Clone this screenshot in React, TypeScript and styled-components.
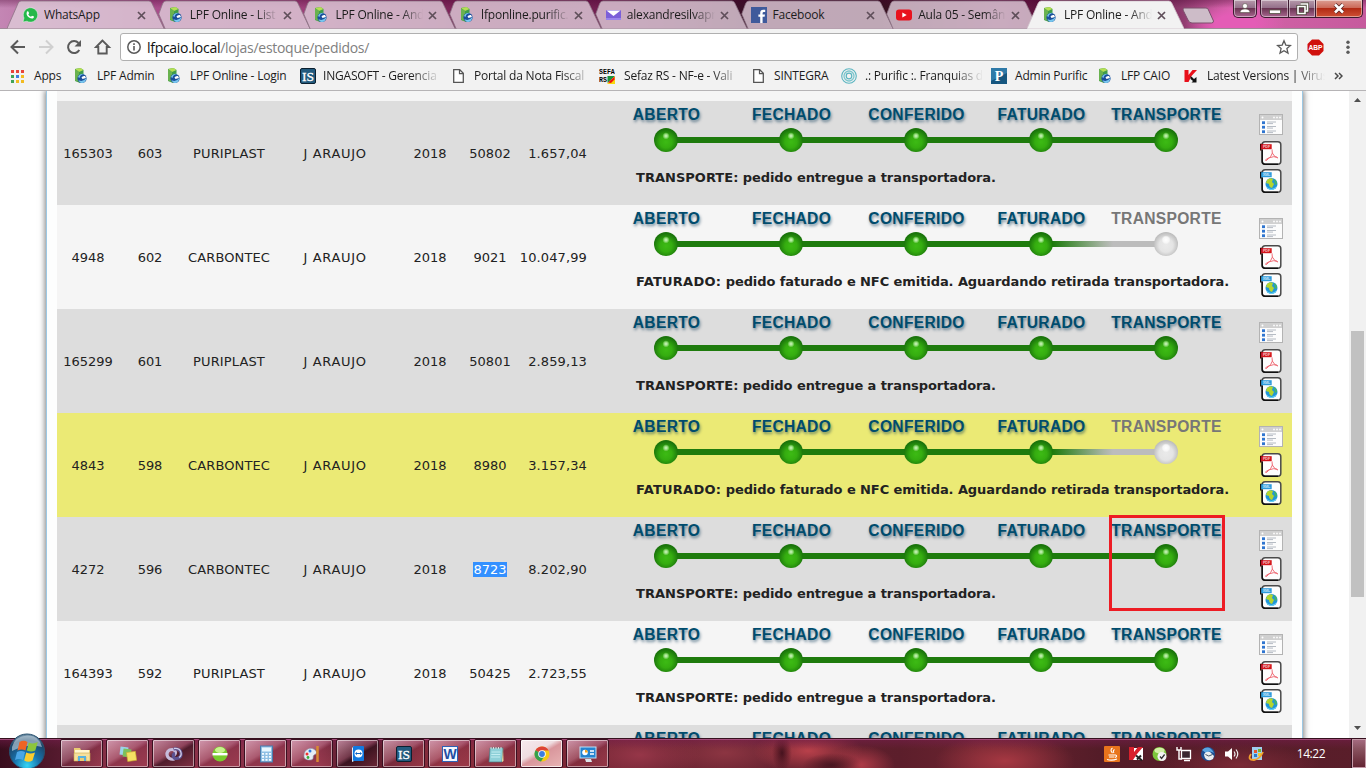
import React from 'react';
import styled, { createGlobalStyle, css } from 'styled-components';

const Global = createGlobalStyle`
  * { box-sizing: border-box; }
  body { margin: 0; overflow: hidden; background: #fff; }
  svg { display: block; flex: none; }
`;
const uiFont = `'Open Sans', 'Noto Sans', sans-serif`;

const Screen = styled.div`
  width: 1366px; height: 768px; display: flex; flex-direction: column; overflow: hidden;
  font-family: ${uiFont}; font-size: 12px; color: #1c1c1c;
`;

/* ---------- browser chrome ---------- */
const TabStrip = styled.div`
  position: relative; height: 29px; flex: none; display: flex; padding-left: 7px;
  border-bottom: 1px solid #a08898;
  background:
    linear-gradient(180deg, rgba(70,0,45,.35) 0, transparent 8px),
    radial-gradient(ellipse 50px 22px at 1235px 24px, #e45cb6 40%, transparent),
    linear-gradient(90deg, #c486b4 0, #a94d8c 150px, #9c3f78 320px, #7a2457 460px, #701f50 620px, #3a1028 740px, #35101f 880px, #6b1d4b 1000px, #4d0c2e 1080px, #8c3a6c 1180px, #d363a8 1230px, #c65a9d 1366px);
`;
const TabBox = styled.div`
  position: relative; width: 157px; height: 29px; margin-right: -11.3px; flex: none;
  display: flex; align-items: center; padding: 1px 0 0 15px;
`;
const TabShape = styled.svg`position: absolute; left: 0; top: 0;`;
const TabIcon = styled.div`position: relative; width: 16px; height: 16px; margin-right: 6px;`;
const TabTitle = styled.div<{ $fade?: boolean }>`
  position: relative; width: 88px; margin-right: 5px; white-space: nowrap; overflow: hidden; line-height: 18px;
  letter-spacing: -0.2px;
  ${p => p.$fade && css`mask-image: linear-gradient(90deg, #000 66px, transparent 88px);`}
`;
const TabClose = styled.div`position: relative; flex: none;`;
const NewTab = styled.svg`margin: 7px 0 0 9px;`;
const WinButtons = styled.div`
  position: absolute; right: 3px; top: 0; display: flex; height: 18px;
`;
const WinButton = styled.div<{ $w: number; $close?: boolean; $solo?: boolean; $first?: boolean }>`
  width: ${p => p.$w}px; height: 18px; display: flex; align-items: center; justify-content: center;
  border: 1px solid #3d1a30; border-top: 0; box-shadow: inset 0 0 0 1px rgba(255,255,255,.45);
  margin-left: ${p => (p.$solo || p.$first ? 0 : -1)}px; margin-right: ${p => (p.$solo ? 3 : 0)}px;
  border-radius: ${p => (p.$solo ? '0 0 5px 5px' : p.$close ? '0 0 5px 0' : p.$first ? '0 0 0 5px' : '0')};
  background: ${p => p.$close
    ? 'linear-gradient(180deg,#dc9f94 0,#cc6a59 45%,#b22b15 50%,#cf5035 100%)'
    : 'linear-gradient(180deg,#b79aab 0,#94708a 45%,#6a3553 50%,#a8668f 100%)'};
`;
const Toolbar = styled.div`
  height: 32px; flex: none; background: #f2f2f2; display: flex; align-items: center; padding: 4px 8px 0 10px;
`;
const NavIcon = styled.div`width: 28px; height: 20px;`;
const AddressBar = styled.div`
  width: 1178px; height: 28px; margin-left: -2px; background: #fff; border: 1px solid #b0b0b0; border-radius: 3px;
  display: flex; align-items: center; padding: 0 5px; font-size: 14px;
`;
const Url = styled.div`
  flex: 1; margin-left: 5px; color: #808080; letter-spacing: -0.29px; white-space: nowrap;
  b { font-weight: 400; color: #111; }
`;
const ExtensionIcon = styled.div`margin: 0 22px 0 9px;`;
const Bookmarks = styled.div`
  height: 30px; flex: none; background: #f2f2f2; border-bottom: 1px solid #b6b4b6; display: flex; align-items: center;
  padding-left: 9px;
`;
const Bookmark = styled.div<{ $w: number; $gap: number }>`
  width: ${p => p.$w}px; flex: none; display: flex; align-items: center; gap: ${p => p.$gap}px;
`;
const BookmarkLabel = styled.div<{ $fade?: boolean }>`
  max-width: 122px; white-space: nowrap; line-height: 18px; letter-spacing: -0.2px;
  ${p => p.$fade && css`mask-image: linear-gradient(90deg, #000 88px, transparent 118px);`}
`;

/* ---------- page ---------- */
const Page = styled.div`
  height: 647px; flex: none; display: flex; overflow: hidden; background: #fff;
`;
const Sheet = styled.div`
  margin-left: 46px; width: 1257px; height: 900px; flex: none; padding: 0 10px; background: #fdfefe;
  border-left: 1px solid #9cc8e4; border-right: 1px solid #9cc8e4; box-shadow: 0 0 6px 1px rgba(0,0,0,.5);
`;
const PrevRow = styled.div`height: 10px; background: #f5f5f5;`;
const Row = styled.div<{ $bg: string }>`
  position: relative; height: 104px; background: ${p => p.$bg};
  display: grid; grid-template-columns: 62px 62px 96px 116px 74px 46px 74px 17px 625px 63px;
  align-items: center; justify-items: center;
  font-family: Verdana, 'DejaVu Sans', sans-serif; font-size: 13px; color: #222;
`;
const Cell = styled.div<{ $ls?: number }>`white-space: nowrap; padding-top: 1px; letter-spacing: ${p => p.$ls ?? -0.05}px;`;
const Marked = styled.span`background: #3390ff; color: #fff;`;
const Amount = styled(Cell)`justify-self: end;`;
const Status = styled.div`width: 625px; height: 104px; grid-column: 9; display: flex; flex-direction: column;`;
const Steps = styled.div`display: flex; padding-top: 4px;`;
const Step = styled.div`position: relative; width: 125px; display: flex; flex-direction: column; align-items: center;`;
const StepLabel = styled.div<{ $off?: boolean }>`
  font: bold 15.6px/20px 'Liberation Sans', Arial, sans-serif; height: 23px; white-space: nowrap; letter-spacing: 0.3px;
  color: ${p => (p.$off ? '#777' : '#004c6d')};
  text-shadow: ${p => (p.$off ? 'none' : '1px 2px 3px rgba(0,50,80,.55)')};
`;
const Track = styled.div<{ $part: 'first' | 'mid' | 'last'; $left: string; $right: string }>`
  width: 125px; height: 24px; display: flex; align-items: center; padding-left: 50px;
  background:
    linear-gradient(${p => (p.$part === 'first' ? 'transparent,transparent' : p.$left)}) 0 9px / 62px 6px no-repeat,
    linear-gradient(${p => (p.$part === 'last' ? 'transparent,transparent' : p.$right)}) 62px 9px / 63px 6px no-repeat;
`;
const Ball = styled.div<{ $off?: boolean }>`
  width: 24px; height: 24px; border-radius: 50%;
  background: ${p => (p.$off
    ? 'radial-gradient(circle at 50% 33%, #fff 0, #f6f6f6 3px, transparent 4.5px), radial-gradient(circle at 50% 55%, #eaeaea 0, #e4e4e4 7px, #bdbdbd 12.5px)'
    : 'radial-gradient(circle at 50% 33%, #d2f5c6 0, #93dc7a 1.8px, transparent 3.6px), radial-gradient(circle at 50% 58%, #3dbb14 0, #35ad10 6px, #1a740b 12.5px)')};
`;
const Message = styled.div`
  margin: 17px 0 0 32px; font: bold 13px/18px Verdana, 'DejaVu Sans', sans-serif; white-space: nowrap; letter-spacing: -0.08px;
`;
const MessageState = styled.span<{ $ls: number }>`letter-spacing: ${p => p.$ls}px;`;
const Actions = styled.div`
  grid-column: 10; align-self: start; padding-top: 13px; padding-left: 21px; display: flex; flex-direction: column; align-items: center;
`;
const ActionLink = styled.div<{ $gap?: number; $shift?: number }>`
  margin-bottom: ${p => p.$gap ?? 0}px; padding-right: ${p => p.$shift ?? 0}px;
`;
const RedFrame = styled.div`
  position: absolute; left: 5px; top: -6px; width: 116px; height: 96px; border: 3px solid #ed1c24;
`;
const ScrollBar = styled.div`
  margin-left: auto; width: 17px; background: #f1f1f1; display: flex; flex-direction: column; align-items: center; padding-top: 7px;
`;
const Thumb = styled.div`width: 13px; height: 266px; margin-top: 229px; margin-bottom: 129px; background: #c1c1c1;`;

/* ---------- taskbar ---------- */
const Taskbar = styled.div`
  position: relative; height: 30px; flex: none; display: flex; align-items: flex-start; border-top: 1px solid #35101e;
  box-shadow: inset 0 1px 0 rgba(180,90,140,.75);
  background:
    linear-gradient(180deg, rgba(120,30,80,.5) 0, transparent 10px),
    radial-gradient(ellipse 10px 18px at 782px 14px, rgba(50,10,22,.8), transparent),
    radial-gradient(ellipse 30px 12px at 832px 26px, rgba(50,14,24,.7), transparent),
    radial-gradient(ellipse 55px 22px at 808px 12px, #b8404a, transparent),
    radial-gradient(ellipse 35px 20px at 860px 26px, #b03c48, transparent),
    radial-gradient(ellipse 70px 28px at 1005px 22px, #a63842, transparent),
    radial-gradient(ellipse 60px 26px at 640px 16px, #963648, transparent),
    radial-gradient(ellipse 70px 26px at 725px 14px, #8c3542, transparent),
    radial-gradient(ellipse 80px 22px at 1240px 26px, #7a2a36, transparent),
    linear-gradient(90deg, #380d1d 0, #551a2e 60px, #8a3148 110px, #8a3148 320px, #4d1626 350px, #8d2f3e 440px, #7d2836 560px, #6a2432 650px, #5c1e2b 900px, #6c2430 980px, #541c28 1100px, #5a1e2a 1366px);
`;
const StartOrb = styled.svg`position: absolute; left: 8px; top: -6px;`;
const TaskButtons = styled.div`display: flex; gap: 3px; padding-left: 60px;`;
const TaskButton = styled.div<{ $active?: boolean; $dark?: boolean }>`
  width: 43px; height: 29px; display: flex; align-items: center; justify-content: center; border-radius: 2px;
  border: 1px solid #3a1020; box-shadow: inset 0 0 0 1px rgba(255,255,255,${p => (p.$active ? 0.75 : 0.5)});
  background: ${p => (p.$active
    ? 'linear-gradient(150deg, #f6eaee 0, #efdde1 40%, #d9969c 52%, #e8b4b4 100%)'
    : p.$dark
      ? 'linear-gradient(150deg, rgba(240,200,215,.6) 0, rgba(150,90,110,.5) 45%, rgba(40,15,25,.6) 55%, rgba(120,50,65,.5) 100%)'
      : 'linear-gradient(150deg, rgba(250,210,225,.65) 0, rgba(210,140,160,.45) 45%, rgba(150,60,80,.3) 55%, rgba(190,80,95,.35) 100%)')};
`;
const Tray = styled.div`margin-left: auto; display: flex; align-items: center; gap: 8px; height: 30px;`;
const Clock = styled.div`
  width: 34px; margin: 0 24px 0 30px; color: #fff; text-align: center; letter-spacing: -0.4px; line-height: 30px;
`;
const ShowDesktop = styled.div`
  width: 14px; height: 29px; border: 1px solid #c49aa8; background: linear-gradient(180deg, rgba(255,220,230,.4), rgba(120,50,70,.3)); box-shadow: -1px 0 #35101e;
`;

/* ---------- icons ---------- */
const Svg = ({ w = 16, h = w, vb, children }: { w?: number; h?: number; vb?: string; children: React.ReactNode }) => (
  <svg width={w} height={h} viewBox={vb ?? `0 0 ${w} ${h}`}>{children}</svg>
);
const LpfIcon = () => (
  <Svg>
    <path d="M2 1 7.500 0 10.500 2v9L7 15l-5-2z" fill="#3f9c4a" />
    <path d="M2 1 7.500 0 10.500 2 6 4z" fill="#b5df55" />
    <path d="M2 1l4 3v10l-4-1.500z" fill="#69b24f" />
    <circle cx="9" cy="10.500" r="4.600" fill="#1b4f9c" />
    <path d="M5 9q2-4 7-3-5 0-5.500 4zM5.500 12q4 2.500 8-2-1 5-4.500 5-2.500 0-3.500-3z" fill="#79c7ef" />
    <path d="M8.500 9.500q1-2 3.500-1.500l1 2-3.500 1z" fill="#fff" />
  </Svg>
);
const WhatsIcon = () => (
  <Svg><path d="M1 15l1-4A7.200 7.200 0 1 1 5 14.200z" fill="#25b84a" stroke="#e9f5ea" strokeWidth=".5" />
    <path d="M5 4.500q1-.8 1.500.3l.6 1.400-.8 1.200q1 1.700 2.700 2.400l1-1.100 2 .9q.3.800-.8 1.600-1.500.9-4.200-.8Q3.500 8 5 4.500z" fill="#fff" /></Svg>
);
const MailIcon = () => (
  <Svg><rect x="1" y="3" width="15" height="10" rx="1" fill="#7b5fd9" /><path d="M1.500 3.500h14L8.500 9z" fill="#fff" /><path d="M1 11h15v2H1z" fill="#9a84ec" /></Svg>
);
const FbIcon = () => (
  <Svg><rect width="16" height="16" fill="#3f5a9b" /><path d="M9.200 16V9.800H7.400V7.400h1.800V5.700q0-3 3-3h2v2.400h-1.400q-1.200 0-1.200 1.100v1.200H14l-.4 2.400h-2V16z" fill="#fff" /></Svg>
);
const YtIcon = () => (
  <Svg><rect y="2.500" width="16" height="11" rx="3" fill="#e8121d" /><path d="M6.300 5.500v5l4.400-2.500z" fill="#fff" /></Svg>
);
const CloseX = () => (
  <Svg w={9}><path d="M1 1l7 7M8 1 1 8" stroke="#5f4f5a" strokeWidth="1.700" /></Svg>
);
const IsIcon = () => (
  <Svg><rect x=".5" y=".5" width="15" height="15" rx="1.500" fill="#235b7e" stroke="#0b2030" />
    <text x="8" y="12.700" textAnchor="middle" fontFamily="Liberation Serif" fontSize="13.500" fill="#fff" stroke="#fff" strokeWidth=".3">IS</text></Svg>
);
const PageIcon = () => (
  <Svg><path d="M2.700 1.700h6l3.600 3.600v9H2.700z" fill="#fff" stroke="#555" strokeWidth="1.300" /><path d="M8.500 1.700v4h3.800" fill="none" stroke="#555" strokeWidth="1.200" /></Svg>
);
const SefaIcon = () => (
  <Svg><text x="0" y="5.800" fontFamily="Liberation Mono" fontWeight="700" fontSize="6.600">SEFA</text>
    <text x="0" y="14.300" fontFamily="Liberation Mono" fontWeight="700" fontSize="6.600">RS</text>
    <path d="M8.500 8H16l-7.500 7z" fill="#18913a" /><path d="M16 8v8H8z" fill="#f7d80e" /><path d="M9 14.500 15.500 8.500v3L12 15z" fill="#e11" /></Svg>
);
const RingsIcon = () => (
  <Svg><g fill="none" stroke="#5bb5c0"><circle cx="8" cy="8" r="7.300" strokeWidth="1.100" /><circle cx="8" cy="8" r="5" strokeWidth="1.300" stroke="#7cc6cd" /><circle cx="8" cy="8" r="2.800" strokeWidth="1.200" /></g></Svg>
);
const PIcon = () => (
  <Svg><rect width="16" height="16" fill="#16567f" /><path d="M0 0h16v5L0 13z" fill="#2f7aa8" />
    <text x="8" y="13" textAnchor="middle" fontFamily="Liberation Serif" fontWeight="700" fontSize="14" fill="#fff">P</text></Svg>
);
const KIcon = () => (
  <Svg><path d="M1.500 2h4v5l4-5h4.500L8.500 8l-3 6h-4z" fill="#e8101a" /><path d="M7.500 8l2 1.500 1.500 1.500 2.500-2v5.500H8.500l1.500-1.500L7.500 11z" fill="#111" /></Svg>
);
const KTray = () => (
  <Svg><rect x="2" y="2" width="13" height="12" fill="#fff" /><path d="M1 1h5v5l4-5h5L9 8l-4 6H1z" fill="#d8202c" /><path d="M8 9.500l6 5M13 9.500l-4 4" stroke="#222" strokeWidth="2" /></Svg>
);
const AppsIcon = () => (
  <Svg>{['#e8433a', '#e8433a', '#e8433a', '#3fa356', '#3b7de0', '#f2bb20', '#3fa356', '#f2bb20', '#f2bb20'].map((c, i) => (
    <rect key={i} x={2 + (i % 3) * 5} y={2 + Math.floor(i / 3) * 5} width="3" height="3" fill={c} />))}</Svg>
);
const ListIcon = () => (
  <Svg w={24} h={21}><rect x=".5" y=".5" width="23" height="20" fill="#fcfcfc" stroke="#b3b3b3" /><path d="M1 1h22v5H1z" fill="#d0d0d0" />
    <circle cx="3.500" cy="3.500" r="1" fill="#fff" /><path d="M14 3.500h2M17 3.500h2M20 3.500h2" stroke="#f6f6f6" strokeWidth="1.600" />
    {[8, 12.5, 17].map(y => <g key={y}><rect x="3" y={y - 0.700} width="3" height="2.800" fill="#2f75d0" /><path d={`M8 ${y}h9M8 ${y + 1.600}h6`} stroke="#aeb4bd" strokeWidth=".9" /></g>)}</Svg>
);
const FileBase = ({ tag, color, dark, children }: { tag: string; color: string; dark: string; children: React.ReactNode }) => (
  <Svg w={22} h={24}><rect x="2.200" y=".800" width="18.600" height="22.400" rx="3" fill="#fdfdfd" stroke="#4a4a4a" strokeWidth="1.500" />
    <path d="M2.200 9v11.500q0 2.700 2.800 2.700h13" fill="none" stroke="#111" strokeWidth="1.500" />
    <path d="M.8 9.500V3.500h2" fill="none" stroke={dark} strokeWidth="1.600" /><rect x="1.200" y="3.200" width="10.500" height="5" fill={color} />
    <text x="6.500" y="7" textAnchor="middle" fontFamily="Liberation Sans" fontWeight="700" fontSize="3.600" fill="#fff" fillOpacity=".75">{tag}</text>{children}</Svg>
);
const PdfIcon = () => (
  <FileBase tag="PDF" color="#d3141c" dark="#400">
    <path d="M12.200 8.500q-.3 1 .2 3.500Q12 15 6.500 19.500q-1.200.3-.8-.8 2-2 7.800-3 4 0 4.300 1.200-2.800 0-5.600-5" fill="none" stroke="#ef6b75" strokeWidth="1" />
  </FileBase>
);
const XmlIcon = () => (
  <FileBase tag="XML" color="#2d9bdd" dark="#111">
    <circle cx="11.500" cy="15" r="6" fill="#2196d8" /><path d="M7 11q3-3 6-1l-1 3 2 2-2 4q-3-1-3-4l-3-1z" fill="#b4d52e" /><path d="M14 10q3 1 3 5l-2 1z" fill="#42b56b" /><path d="M6 17q5 6 11 0-2 4-5.500 4T6 17z" fill="#65d2f3" />
  </FileBase>
);

const tabs: [React.ReactNode, string, boolean][] = [
  [<WhatsIcon />, 'WhatsApp', false], [<LpfIcon />, 'LPF Online - List', true], [<LpfIcon />, 'LPF Online - And', true],
  [<LpfIcon />, 'lfponline.purific.', true], [<MailIcon />, 'alexandresilvapr', true], [<FbIcon />, 'Facebook', false],
  [<YtIcon />, 'Aula 05 - Semân', true], [<LpfIcon />, 'LPF Online - And', true],
];
const bookmarks: [React.ReactNode, string, number, boolean, number?][] = [
  [<AppsIcon />, 'Apps', 64, false, 9], [<LpfIcon />, 'LPF Admin', 93, false, 8], [<LpfIcon />, 'LPF Online - Login', 134, false, 8],
  [<IsIcon />, 'INGASOFT - Gerencia', 151, true], [<PageIcon />, 'Portal da Nota Fiscal', 148, true],
  [<SefaIcon />, 'Sefaz RS - NF-e - Vali', 152, true, 9], [<PageIcon />, 'SINTEGRA', 90, false],
  [<RingsIcon />, '.: Purific :. Franquias d', 150, true, 8], [<PIcon />, 'Admin Purific', 106, false, 8],
  [<LpfIcon />, 'LFP CAIO', 86, false, 8], [<KIcon />, 'Latest Versions | Virus', 151, true, 8],
];
const firstTab = 'M0 28.500 11 3.500Q12 1 14 1H142Q144 1 145 3.500L157 28.500V29H0z';
const nextTab = 'M12 28.500 5.800 14 9.500 4Q10.500 1 13 1H142Q144 1 145 3.500L157 28.500V29H12z';

const Chrome = () => (
  <>
    <TabStrip>
      {tabs.map(([icon, title, fade], i) => {
        const active = i === tabs.length - 1;
        return (
          <TabBox key={i}>
            <TabShape width="157" height="29" viewBox="0 0 157 29">
              <path d={i === 0 || active ? firstTab : nextTab}
                fill={active ? '#f2f2f2' : 'rgba(222,203,216,.82)'} stroke={active ? '#cfc0ca' : '#8d7485'} strokeWidth=".8" />
            </TabShape>
            <TabIcon>{icon}</TabIcon><TabTitle $fade={fade}>{title}</TabTitle><TabClose><CloseX /></TabClose>
          </TabBox>
        );
      })}
      <NewTab width="34" height="17" viewBox="0 0 34 17"><path d="M2 1h22q2 0 2.500 2l5 11q0 2-2 2H10q-3 0-4-3L1 3q0-2 1-2z" fill="#cdbcc8" stroke="#7c4f6c" /></NewTab>
      <WinButtons>
        <WinButton $w={24} $solo><Svg w={12} h={11}><circle cx="6" cy="3" r="2.500" fill="#fff" stroke="#443" strokeWidth=".5" /><path d="M1 9.500Q1 6 6 6t5 3.500z" fill="#fff" stroke="#443" strokeWidth=".5" /></Svg></WinButton>
        <WinButton $w={29} $first><Svg w={14} h={12}><rect x="1.500" y="7" width="11" height="3.500" fill="#fff" stroke="#554" strokeWidth=".8" /></Svg></WinButton>
        <WinButton $w={28}><Svg w={13} h={13}><path d="M4.500 2h7v7h-2M2 4.500h7v7H2z" fill="none" stroke="#443" strokeWidth="3" /><path d="M4.500 2h7v7h-2M2 4.500h7v7H2z" fill="none" stroke="#fff" strokeWidth="1.600" /></Svg></WinButton>
        <WinButton $w={48} $close><Svg w={12} h={11}><path d="M2 1.500l8 8M10 1.500l-8 8" stroke="#522" strokeWidth="4" /><path d="M2 1.500l8 8M10 1.500l-8 8" stroke="#fff" strokeWidth="2.600" /></Svg></WinButton>
      </WinButtons>
    </TabStrip>
    <Toolbar>
      <NavIcon><Svg w={16} h={20}><path d="M15 10H2M8 3.500 1.500 10 8 16.500" fill="none" stroke="#5a5a5a" strokeWidth="2" /></Svg></NavIcon>
      <NavIcon><Svg w={16} h={20}><path d="M1 10h13M8 3.500l6.500 6.500L8 16.500" fill="none" stroke="#d0d0d0" strokeWidth="2" /></Svg></NavIcon>
      <NavIcon><Svg w={16} h={20}><path d="M13.300 13A6 6 0 1 1 12.500 6" fill="none" stroke="#5a5a5a" strokeWidth="2" /><path d="M15 3v6.500H8.500z" fill="#5a5a5a" /></Svg></NavIcon>
      <NavIcon><Svg w={18} h={20}><path d="M8.500 3.500 2 10h2.300v6.500h8.400V10H15z" fill="none" stroke="#5a5a5a" strokeWidth="1.900" /></Svg></NavIcon>
      <AddressBar>
        <Svg w={16}><circle cx="8" cy="8" r="6.200" fill="none" stroke="#5a5a5a" strokeWidth="1.500" /><path d="M8 7v4.500M8 4.200v1.700" stroke="#5a5a5a" strokeWidth="1.600" /></Svg>
        <Url><b>lfpcaio.local</b>/lojas/estoque/pedidos/</Url>
        <Svg w={16}><path d="M8 1.800l1.800 4.300 4.700.4-3.600 3.100 1.100 4.500L8 11.700l-4 2.400 1.100-4.500L1.500 6.500l4.700-.4z" fill="none" stroke="#5a5a5a" strokeWidth="1.300" /></Svg>
      </AddressBar>
      <ExtensionIcon>
        <Svg w={17}><path d="M5 .5h7L16.500 5v7L12 16.500H5L.5 12V5z" fill="#d0100c" /><text x="8.500" y="11.200" textAnchor="middle" fontFamily="Liberation Sans" fontWeight="700" fontSize="7.500" fill="#fff" textLength="14" lengthAdjust="spacingAndGlyphs">ABP</text></Svg>
      </ExtensionIcon>
      <Svg w={4} h={14}><g fill="#5a5a5a"><circle cx="2" cy="2.200" r="1.700" /><circle cx="2" cy="7.200" r="1.700" /><circle cx="2" cy="12.200" r="1.700" /></g></Svg>
    </Toolbar>
    <Bookmarks>
      {bookmarks.map(([icon, label, w, fade, gap], i) => (
        <Bookmark key={i} $w={w} $gap={gap ?? 7}>{icon}<BookmarkLabel $fade={fade}>{label}</BookmarkLabel></Bookmark>
      ))}
      <Svg w={9} h={8}><path d="M1 1l3 3-3 3M5 1l3 3-3 3" fill="none" stroke="#4a4a4a" strokeWidth="1.500" /></Svg>
    </Bookmarks>
  </>
);

const labels = ['ABERTO', 'FECHADO', 'CONFERIDO', 'FATURADO', 'TRANSPORTE'];
const green = '#1e7b0d,#1e7b0d';
const fadeStart = '90deg,#1e7b0d 12px,#a9b5a6';
const fadeEnd = '90deg,#a9b5a6,#bcbcbc 9px';
const cellSpacing = [-0.05, -0.05, 0.12, 0.65, -0.05, 0];
type Order = { c: string[]; total: string; done: boolean; bg: string; mark?: boolean };
const orders: Order[] = [
  { c: ['165303', '603', 'PURIPLAST', 'J ARAUJO', '2018', '50802'], total: '1.657,04', done: true, bg: '#ddd' },
  { c: ['4948', '602', 'CARBONTEC', 'J ARAUJO', '2018', '9021'], total: '10.047,99', done: false, bg: '#f5f5f5' },
  { c: ['165299', '601', 'PURIPLAST', 'J ARAUJO', '2018', '50801'], total: '2.859,13', done: true, bg: '#ddd' },
  { c: ['4843', '598', 'CARBONTEC', 'J ARAUJO', '2018', '8980'], total: '3.157,34', done: false, bg: '#ebea75' },
  { c: ['4272', '596', 'CARBONTEC', 'J ARAUJO', '2018', '8723'], total: '8.202,90', done: true, bg: '#ddd', mark: true },
  { c: ['164393', '592', 'PURIPLAST', 'J ARAUJO', '2018', '50425'], total: '2.723,55', done: true, bg: '#f5f5f5' },
];
const StepBar = ({ done, mark }: { done: boolean; mark?: boolean }) => (
  <Steps>
    {labels.map((l, i) => {
      const off = !done && i === 4;
      return (
        <Step key={l}>
          <StepLabel $off={off}>{l}</StepLabel>
          <Track $part={i === 0 ? 'first' : i === 4 ? 'last' : 'mid'} $left={off ? fadeEnd : green}
            $right={!done && i === 3 ? fadeStart : green}><Ball $off={off} /></Track>
          {mark && i === 4 && <RedFrame />}
        </Step>
      );
    })}
  </Steps>
);
const OrderRow = ({ o }: { o: Order }) => (
  <Row $bg={o.bg}>
    {o.c.map((t, i) => <Cell key={i} $ls={cellSpacing[i]}>{o.mark && i === 5 ? <Marked>{t}</Marked> : t}</Cell>)}
    <Amount $ls={0.12}>{o.total}</Amount>
    <Status>
      <StepBar done={o.done} mark={o.mark} />
      <Message>
        <MessageState $ls={o.done ? 0.02 : 0.25}>{o.done ? 'TRANSPORTE:' : 'FATURADO:'}</MessageState>
        {o.done ? ' pedido entregue a transportadora.' : ' pedido faturado e NFC emitida. Aguardando retirada transportadora.'}
      </Message>
    </Status>
    <Actions>
      <ActionLink $gap={6}><ListIcon /></ActionLink>
      <ActionLink $gap={4} $shift={1}><PdfIcon /></ActionLink>
      <ActionLink $shift={1}><XmlIcon /></ActionLink>
    </Actions>
  </Row>
);

/* taskbar glyphs, in button order */
const taskIcons = [
  <Svg w={18}><path d="M1 3h6l1 2h9v11H1z" fill="#e9cc73" /><path d="M2 5h14v5H2z" fill="#fff6cf" /><path d="M1 8h16v8h-4v-4H5v4H1z" fill="#f5e09b" stroke="#c9a850" strokeWidth=".6" /><path d="M5 11h8v5h-2v-3H7v3H5z" fill="#58b2dd" /></Svg>,
  <Svg w={18}><rect x="1" y="2" width="8" height="8" fill="#9bd3ea" transform="rotate(8 5 6)" /><rect x="4" y="4" width="8" height="8" fill="#7cc05c" transform="rotate(8 8 8)" /><rect x="8" y="7" width="9" height="9" fill="#f5e063" stroke="#cda92e" strokeWidth=".6" transform="rotate(-8 12 11)" /></Svg>,
  <Svg w={18}><path d="M9.500 14C.5 16-.5 4.500 7 4.500c4 0 4.500 5 1.500 5.500" fill="none" stroke="#c6bbdc" strokeWidth="3.200" /><path d="M8.500 4c9-2 10 9.500 3 9.500-4 0-4-4.500-1.500-5" fill="none" stroke="#5b5190" strokeWidth="3.200" /><path d="M9 3.500c8-1 8.500 7 5 9" fill="none" stroke="#d3cde6" strokeWidth="1.300" /></Svg>,
  <Svg w={18}><circle cx="9" cy="9" r="7.500" fill="#79cc2d" /><ellipse cx="9" cy="5" rx="5" ry="3" fill="#c9f28e" /><path d="M1.500 8h15v2.400h-15z" fill="#fff" /></Svg>,
  <Svg w={18}><rect x="3.500" y="1" width="12" height="16" fill="#8fbfe4" stroke="#4a7bab" /><rect x="5" y="2.500" width="9" height="4" fill="#e8f7ff" />{[8, 11, 14].map(y => <path key={y} d={`M5 ${y + .8}h2M8.500 ${y + .8}h2M12 ${y + .8}h2`} stroke="#f6fbff" strokeWidth="1.800" />)}</Svg>,
  <Svg w={18}><path d="M1 11C1 3 9 2 12 5s1 4-1 5 1 5-4 5-6-2-6-4z" fill="#e7eef5" stroke="#8d9fb4" strokeWidth=".6" /><circle cx="4" cy="9" r="1.500" fill="#e33" /><circle cx="7" cy="6" r="1.500" fill="#2a7be0" /><circle cx="5" cy="12.500" r="1.400" fill="#3aad3a" /><path d="M14.500 1v16" stroke="#d98a32" strokeWidth="2.500" /></Svg>,
  <Svg w={18}><path d="M3 3 5 1v15l-2 1z" fill="#e4f1fb" /><rect x="4" y="1" width="11" height="15" rx="1" fill="#1279e0" /><circle cx="9.500" cy="8.500" r="4" fill="#fff" /><path d="M6 8.500l2-1.500v1h3V7l2 1.500-2 1.500V9H8v1z" fill="#0d64c4" /></Svg>,
  <IsIcon />,
  <Svg w={18}><rect x="1.500" y="1.500" width="15" height="15" fill="#f4f8ff" stroke="#2e62b5" /><text x="9" y="14" textAnchor="middle" fontFamily="Liberation Sans" fontWeight="700" fontSize="14" fill="#1f4fa3">W</text></Svg>,
  <Svg w={18}><path d="M3 3h13l-1 14H2z" fill="#8ed0d8" stroke="#49757c" strokeWidth=".7" /><path d="M16 3l.5 13-1.500 1z" fill="#f0e7a8" /><path d="M4 2v2M6.500 2v2M9 2v2M11.500 2v2M14 2v2" stroke="#ddd" /><path d="M4.500 7h9M4.300 9.500h9M4 12h9" stroke="#c2edf1" /></Svg>,
  <Svg w={18}><circle cx="9" cy="9" r="7.500" fill="#f6c915" /><path d="M9 9 2.500 5.300A7.500 7.500 0 0 1 15.600 5.500H9z" fill="#dd4237" /><path d="M9 9 2.500 5.300A7.500 7.500 0 0 0 8 16.450l3.500-5.500z" fill="#35a04c" /><circle cx="9" cy="9" r="3.800" fill="#fff" /><circle cx="9" cy="9" r="2.900" fill="#3c7de0" /></Svg>,
  <Svg w={18}><rect x="1" y="2" width="16" height="11" fill="#2483d0" stroke="#bde1f8" /><circle cx="6" cy="7.500" r="2.800" fill="#fff" /><path d="M6 7.500V4.700a2.800 2.800 0 0 1 2.800 2.800z" fill="#f2a21c" /><path d="M11 6h4M11 9h4" stroke="#fff" strokeWidth="1.500" /><path d="M6 14h6l1 3H7z" fill="#dce5ec" /></Svg>,
];

const trayIcons = [
  <Svg><rect width="16" height="16" rx="1" fill="#e8741c" /><path d="M8.500 2q-3 2 0 5M10.500 3.500q-2 1.500-.5 3.500M4.500 9h7q2.500 1-.5 2.500M5 11h5.500M3 13.500q5 1.500 10-.5" fill="none" stroke="#fff" strokeWidth="1.100" /></Svg>,
  <KTray />,
  <Svg><circle cx="7.500" cy="8" r="7" fill="#7cc63a" /><ellipse cx="7.500" cy="4.500" rx="5" ry="2.800" fill="#d2f0a5" /><circle cx="10" cy="10.500" r="4.500" fill="#f3f3f3" /><path d="M8 10.500l1.600 2 3-4" fill="none" stroke="#333" strokeWidth="1.300" /></Svg>,
  <Svg><path d="M5.500 4.500h9v8h-9z" fill="#3a2730" stroke="#fff" strokeWidth="1.300" /><path d="M8 14.500h6M1 1v3h4V1M3 4v9h3" fill="none" stroke="#fff" strokeWidth="1.400" /></Svg>,
  <Svg><circle cx="8" cy="8" r="7" fill="#1f4f93" /><path d="M2 4q7-6 12 3-5-3-8 0z" fill="#5ba5e0" /><path d="M4 9q1-4 6-3l4 4-1 3q-5 3-8-1z" fill="#e9edf0" /><path d="M5.500 8.500q3 3 7 0" fill="none" stroke="#456" strokeWidth="1" /></Svg>,
  <Svg><path d="M1 5.500h3L8 2v12l-4-3.500H1z" fill="#fff" /><path d="M10 5.500q2 2.500 0 5M12 3.500q3.500 4.500 0 9" fill="none" stroke="#eee" strokeWidth="1.200" /></Svg>,
  <Svg><path d="M4 1h10v13H4z" fill="#9fd0ef" /><path d="M6 4h3v3H6z" fill="#e8582a" /><path d="M10 3h3v3h-3z" fill="#6db33c" /><path d="M6 8h3v3H6z" fill="#2a79cd" /><path d="M10 7h3v3h-3z" fill="#f5c92b" /><path d="M3 8q-4 6 3 6 6-1 9-8" fill="none" stroke="#f3a02c" strokeWidth="1.800" /></Svg>,
];

export default function App() {
  return (
    <Screen>
      <Global />
      <Chrome />
      <Page>
        <Sheet>
          <PrevRow />
          {orders.map((o, i) => <OrderRow key={i} o={o} />)}
          <Row $bg="#ddd"><Status><StepBar done /></Status></Row>
        </Sheet>
        <ScrollBar>
          <Svg w={7} h={4}><path d="M0 4 3.500 0 7 4z" fill="#505050" /></Svg>
          <Thumb />
          <Svg w={7} h={4}><path d="M0 0 3.500 4 7 0z" fill="#505050" /></Svg>
        </ScrollBar>
      </Page>
      <Taskbar>
        <TaskButtons>{taskIcons.map((ic, i) => <TaskButton key={i} $active={i === 10} $dark={i === 2 || i === 6}>{ic}</TaskButton>)}</TaskButtons>
        <StartOrb width="38" height="38" viewBox="0 0 38 38">
          <defs>
            <radialGradient id="orb" cx=".5" cy=".9" r=".9"><stop offset="0" stopColor="#35d5f5" /><stop offset=".4" stopColor="#1873ad" /><stop offset=".8" stopColor="#1b4468" /><stop offset="1" stopColor="#7b9bb0" /></radialGradient>
          </defs>
          <circle cx="19" cy="18.500" r="17.500" fill="url(#orb)" stroke="#28506e" />
          <path d="M4 14Q7 3 19 2.500T34 14Q19 10 4 18z" fill="#c9d9e2" opacity=".6" />
          <path d="M11.500 9q4-2.500 8 0l-2 8.500q-4-2-8 0z" fill="#ee6424" />
          <path d="M20.800 9.500q4.200 2 9-.5l-2.500 8.500q-4 2-8.500 0z" fill="#8cc63c" />
          <path d="M9 19q4-2 8 0l-2 8q-4-2-8 0z" fill="#4aa6e6" />
          <path d="M18.200 19.500q4.200 2 8.800 0l-2.500 8q-4 2.500-8.300 0z" fill="#fbcc2f" />
        </StartOrb>
        <Tray>{trayIcons.map((ic, i) => <React.Fragment key={i}>{ic}</React.Fragment>)}</Tray>
        <Clock>14:22</Clock>
        <ShowDesktop />
      </Taskbar>
    </Screen>
  );
}
